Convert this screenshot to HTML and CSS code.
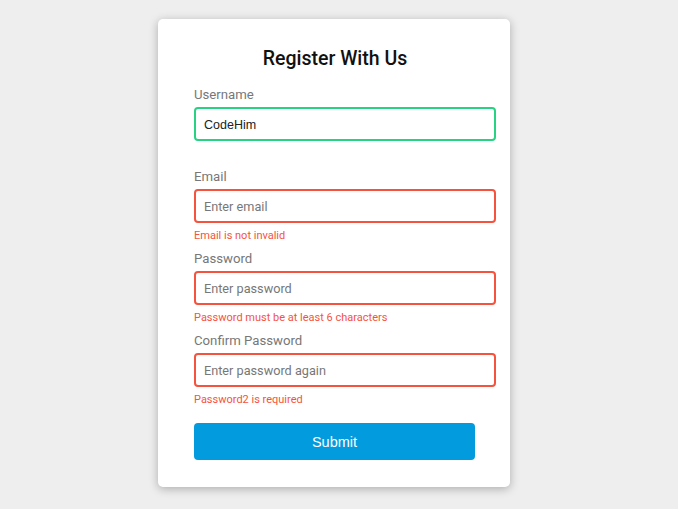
FILE: index.html
```html
<!DOCTYPE html>
<html lang="en">
<head>
<meta charset="utf-8">
<title>Register With Us</title>
<link rel="stylesheet" href="styles.css">
</head>
<body>
<div class="page">
  <form class="card" novalidate>
    <h2 class="title">Register With Us</h2>
    <div class="field success">
      <label class="label" for="username">Username</label>
      <input class="input" id="username" type="text" value="CodeHim" placeholder="Enter username">
      <small class="error hidden">Error message</small>
    </div>
    <div class="field invalid">
      <label class="label" for="email">Email</label>
      <input class="input" id="email" type="text" placeholder="Enter email">
      <small class="error">Email is not invalid</small>
    </div>
    <div class="field invalid">
      <label class="label" for="password">Password</label>
      <input class="input" id="password" type="password" placeholder="Enter password">
      <small class="error">Password must be at least 6 characters</small>
    </div>
    <div class="field invalid">
      <label class="label" for="password2">Confirm Password</label>
      <input class="input" id="password2" type="password" placeholder="Enter password again">
      <small class="error">Password2 is required</small>
    </div>
    <button class="submit" type="button">Submit</button>
  </form>
</div>
</body>
</html>
```

FILE: styles.css
```css
* { box-sizing: border-box; }

html, body {
  margin: 0;
  height: 100%;
}

body {
  background: #eeeeee;
  font-family: Roboto, "Noto Sans", Arial, sans-serif;
}

.page {
  display: flex;
  justify-content: center;
  align-items: flex-start;
  padding: 19px 10px 0 0;
}

.card {
  width: 352px;
  background: #ffffff;
  border-radius: 5px;
  box-shadow: 0 2px 10px rgba(0, 0, 0, 0.28);
  padding: 26px 35px 27px 36px;
  display: flex;
  flex-direction: column;
}

.title {
  margin: 0 0 13px 0;
  font-size: 19.5px;
  line-height: 28px;
  font-weight: 500;
  color: #111;
  text-align: center;
  padding-left: 1px;
}

.field {
  display: flex;
  flex-direction: column;
  margin-bottom: 7px;
}

.label {
  display: block;
  color: #777;
  font-size: 13.2px;
  line-height: 17px;
  margin-bottom: 4px;
}

.input {
  width: calc(100% + 21px);
  height: 34px;
  border: 2px solid #f0f0f0;
  border-radius: 4px;
  padding: 2px 8px 0 8px;
  font-family: "Liberation Sans", Arial, sans-serif;
  font-size: 12.5px;
  color: #222;
  background: #fff;
  outline: none;
}

.input::placeholder {
  font-family: Roboto, "Noto Sans", Arial, sans-serif;
  color: #777;
  font-size: 12.7px;
}

.success .input { border-color: #27d283; }
.invalid .input { border-color: #f5533d; }

.error {
  display: block;
  margin-top: 6px;
  height: 14px;
  font-size: 11px;
  line-height: 14px;
  color: #f5533d;
}

.error.hidden { visibility: hidden; }

.submit {
  margin-top: 9px;
  width: 100%;
  height: 37px;
  border: none;
  border-radius: 4px;
  background: #029bdd;
  color: #fff;
  font-family: "Liberation Sans", Arial, sans-serif;
  font-size: 14.5px;
  cursor: pointer;
}
```
